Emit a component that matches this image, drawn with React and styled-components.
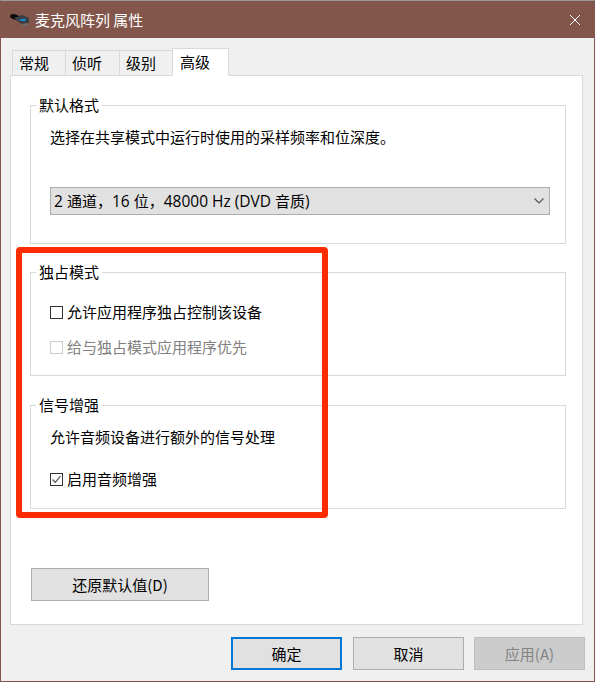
import React from "react";
import styled, { createGlobalStyle } from "styled-components";

const Global = createGlobalStyle`
  html, body { margin: 0; padding: 0; background: #f0f0f0; }
  * { box-sizing: border-box; }
  body { font-family: "Noto Sans CJK SC", "Noto Sans", sans-serif; font-size: 15px; line-height: 20px; color: #000; }
`;

const Win = styled.div`
  position: relative;
  width: 595px;
  height: 682px;
  display: flex;
  flex-direction: column;
  background: #f0f0f0;
  border-left: 1px solid #82564a;
  border-right: 1px solid #82564a;
  border-bottom: 1px solid #82564a;
  border-top: 1px solid #9a9a9a;
`;
const TitleBar = styled.div`
  height: 37px;
  flex: none;
  display: flex;
  align-items: center;
  padding: 0 14px 0 9px;
  background: #82564a;
  color: #fff;
`;
const TitleText = styled.span`
  margin-left: 5px;
  flex: 1;
`;
const Body = styled.div`
  flex: 1;
  display: flex;
  flex-direction: column;
  padding: 10px 11px 10px 9px;
`;
const Tabs = styled.div`
  display: flex;
  align-items: flex-end;
  height: 28px;
  padding-left: 2px;
  margin-bottom: -1px;
  position: relative;
  z-index: 1;
`;
const Tab = styled.div`
  height: ${(p) => (p.$active ? 28 : 26)}px;
  width: ${(p) => p.$w}px;
  display: flex;
  align-items: center;
  padding-left: ${(p) => (p.$active ? 7 : 6)}px;
  background: ${(p) => (p.$active ? "#fff" : "#f0f0f0")};
  border: 1px solid #d9d9d9;
  border-right-width: ${(p) => (p.$active ? 1 : 0)}px;
  border-bottom-color: ${(p) => (p.$active ? "#fff" : "#d9d9d9")};
`;
const Panel = styled.div`
  height: 550px;
  display: flex;
  flex-direction: column;
  background: #fff;
  border: 1px solid #d9d9d9;
  padding: 19px 16px 0 19px;
`;
const Group = styled.fieldset`
  margin: 0 0 ${(p) => p.$after}px;
  height: ${(p) => p.$h}px;
  padding: 0 15px 0 19px;
  border: 1px solid #d9d9d9;
  min-width: 0;
`;
const Legend = styled.legend`
  margin-left: -14px;
  padding: 0 3px;
  line-height: 20px;
`;
const Line = styled.div`
  margin-top: ${(p) => p.$top}px;
`;
const Select = styled.div`
  margin-top: ${(p) => p.$top}px;
  height: 28px;
  display: flex;
  align-items: center;
  justify-content: space-between;
  padding: 0 5px 0 3px;
  background: #e1e1e1;
  border: 1px solid #adadad;
`;
const Latin = styled.span`
  font-family: "Open Sans", sans-serif;
  font-size: 15.5px;
`;
const CheckRow = styled.label`
  display: flex;
  align-items: center;
  gap: 4px;
  margin-top: ${(p) => p.$top}px;
  color: ${(p) => (p.$disabled ? "#808080" : "#000")};
`;
const Box = styled.span`
  width: 13px;
  height: 13px;
  flex: none;
  display: flex;
  background: #fff;
  border: 1px solid ${(p) => (p.$disabled ? "#cccccc" : "#333333")};
`;
const Button = styled.div`
  height: 33px;
  width: ${(p) => p.$w}px;
  flex: none;
  display: flex;
  align-items: center;
  justify-content: center;
  margin-right: ${(p) => p.$gap || 0}px;
  background: ${(p) => (p.$disabled ? "#cccccc" : "#e1e1e1")};
  color: ${(p) => (p.$disabled ? "#838383" : "#000")};
  border: ${(p) => (p.$primary ? "2px solid #0078d7" : p.$disabled ? "1px solid #bfbfbf" : "1px solid #adadad")};
`;
const RestoreRow = styled.div`
  margin-top: 59px;
  margin-left: 1px;
`;
const Footer = styled.div`
  display: flex;
  margin-top: 12px;
  margin-left: 221px;
  margin-right: -3px;
`;
const Mark = styled.div`
  position: absolute;
  left: 15px;
  top: 246px;
  width: 312px;
  height: 271px;
  border: 6px solid #fd2c03;
  border-radius: 4px;
  pointer-events: none;
  z-index: 2;
`;

const MicIcon = () => (
  <svg width="20" height="14" viewBox="0 0 20 14">
    <ellipse cx="5" cy="4" rx="5" ry="2.6" fill="#0a0a0a" transform="rotate(18 5 4)" />
    <path d="M4 5 L12 2 L19 5 L19 10 L12 11 L7 8 Z" fill="#3a3d42" />
    <path d="M9 6.5 L16 5.5 L15 8 L11 8 Z" fill="#1688d8" />
    <path d="M12 11 L18 10 L18 12 L13 13 Z" fill="#6e6e6e" />
  </svg>
);

export default function App() {
  return (
    <Win>
      <Global />
      <TitleBar>
        <MicIcon />
        <TitleText>麦克风阵列 属性</TitleText>
        <svg width="10" height="10" viewBox="0 0 10 10">
          <path d="M0 0 L10 10 M10 0 L0 10" stroke="#fff" strokeWidth="1" fill="none" />
        </svg>
      </TitleBar>
      <Body>
        <Tabs>
          <Tab $w={53}>常规</Tab>
          <Tab $w={54}>侦听</Tab>
          <Tab $w={53}>级别</Tab>
          <Tab $w={57} $active>高级</Tab>
        </Tabs>
        <Panel>
          <Group $h={149} $after={18}>
            <Legend>默认格式</Legend>
            <Line $top={12}>选择在共享模式中运行时使用的采样频率和位深度。</Line>
            <Select $top={40}>
              <span>
                <Latin>2 </Latin>通道，<Latin>16 </Latin>位，<Latin>48000 Hz (DVD </Latin>音质<Latin>)</Latin>
              </span>
              <svg width="10" height="6" viewBox="0 0 10 6">
                <path d="M0.5 0.5 L5 5 L9.5 0.5" stroke="#555" strokeWidth="1.2" fill="none" />
              </svg>
            </Select>
          </Group>
          <Group $h={114} $after={19}>
            <Legend>独占模式</Legend>
            <CheckRow $top={20}>
              <Box />
              允许应用程序独占控制该设备
            </CheckRow>
            <CheckRow $top={15} $disabled>
              <Box $disabled />
              给与独占模式应用程序优先
            </CheckRow>
          </Group>
          <Group $h={114} $after={0}>
            <Legend>信号增强</Legend>
            <Line $top={12}>允许音频设备进行额外的信号处理</Line>
            <CheckRow $top={22}>
              <Box>
                <svg width="11" height="11" viewBox="0 0 11 11">
                  <path d="M1.5 5.5 L4.3 8.3 L9.5 2.2" stroke="#555" strokeWidth="1.2" fill="none" />
                </svg>
              </Box>
              启用音频增强
            </CheckRow>
          </Group>
          <RestoreRow>
            <Button $w={178}>还原默认值(D)</Button>
          </RestoreRow>
        </Panel>
        <Footer>
          <Button $w={111} $gap={11} $primary>确定</Button>
          <Button $w={111} $gap={10}>取消</Button>
          <Button $w={111} $disabled>应用(A)</Button>
        </Footer>
      </Body>
      <Mark />
    </Win>
  );
}
